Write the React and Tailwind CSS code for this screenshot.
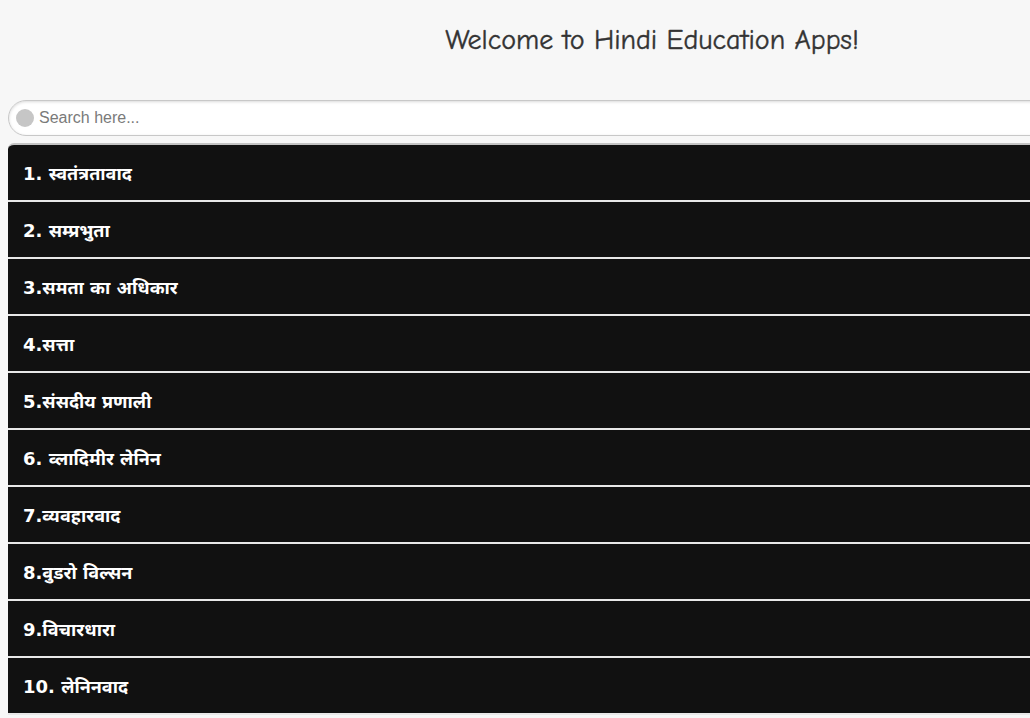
export default function App() {
  const items = [
    "1. स्वतंत्रतावाद",
    "2. सम्प्रभुता",
    "3.समता का अधिकार",
    "4.सत्ता",
    "5.संसदीय प्रणाली",
    "6. व्लादिमीर लेनिन",
    "7.व्यवहारवाद",
    "8.वुडरो विल्सन",
    "9.विचारधारा",
    "10. लेनिनवाद",
  ];
  return (
    <div className="w-[1030px] h-[718px] overflow-hidden bg-[#f7f7f7]">
      <div className="w-[1304px]">
        <div className="h-[84px] flex items-center justify-center pb-[4px]">
          <h1 className="text-[28px] text-[#333] leading-none" style={{ fontFamily: '"Comic Sans MS", "Comic Neue", "Open Sans", sans-serif', WebkitTextStroke: '0.4px #333' }}>
            Welcome to Hindi Education Apps!
          </h1>
        </div>
        <div className="px-[8px] pt-[16px]">
          <div className="h-[36px] rounded-[18px] border border-[#c8c8c8] bg-white shadow-[inset_0_1px_3px_rgba(0,0,0,0.15)] flex items-center pl-[7px] gap-[5px]">
            <span className="w-[18px] h-[18px] rounded-full bg-[#c6c6c6]" />
            <span className="text-[16px] text-[#7a7a7a]" style={{ fontFamily: '"Liberation Sans", Arial, sans-serif' }}>Search here...</span>
          </div>
          <div className="mt-[7px] rounded-tl-[6px] overflow-hidden border-t-2 border-[#c4c4c4]">
            {items.map((t, i) => (
              <div key={i} className="h-[57px] bg-[#111] border-b-2 border-[#e8e8e8] flex items-center pl-[15px] pt-[2px]">
                <span className="text-white font-bold text-[18px]" style={{ fontFamily: '"DejaVu Sans", Verdana, "Noto Sans", sans-serif' }}>{t}</span>
              </div>
            ))}
          </div>
        </div>
      </div>
    </div>
  );
}
